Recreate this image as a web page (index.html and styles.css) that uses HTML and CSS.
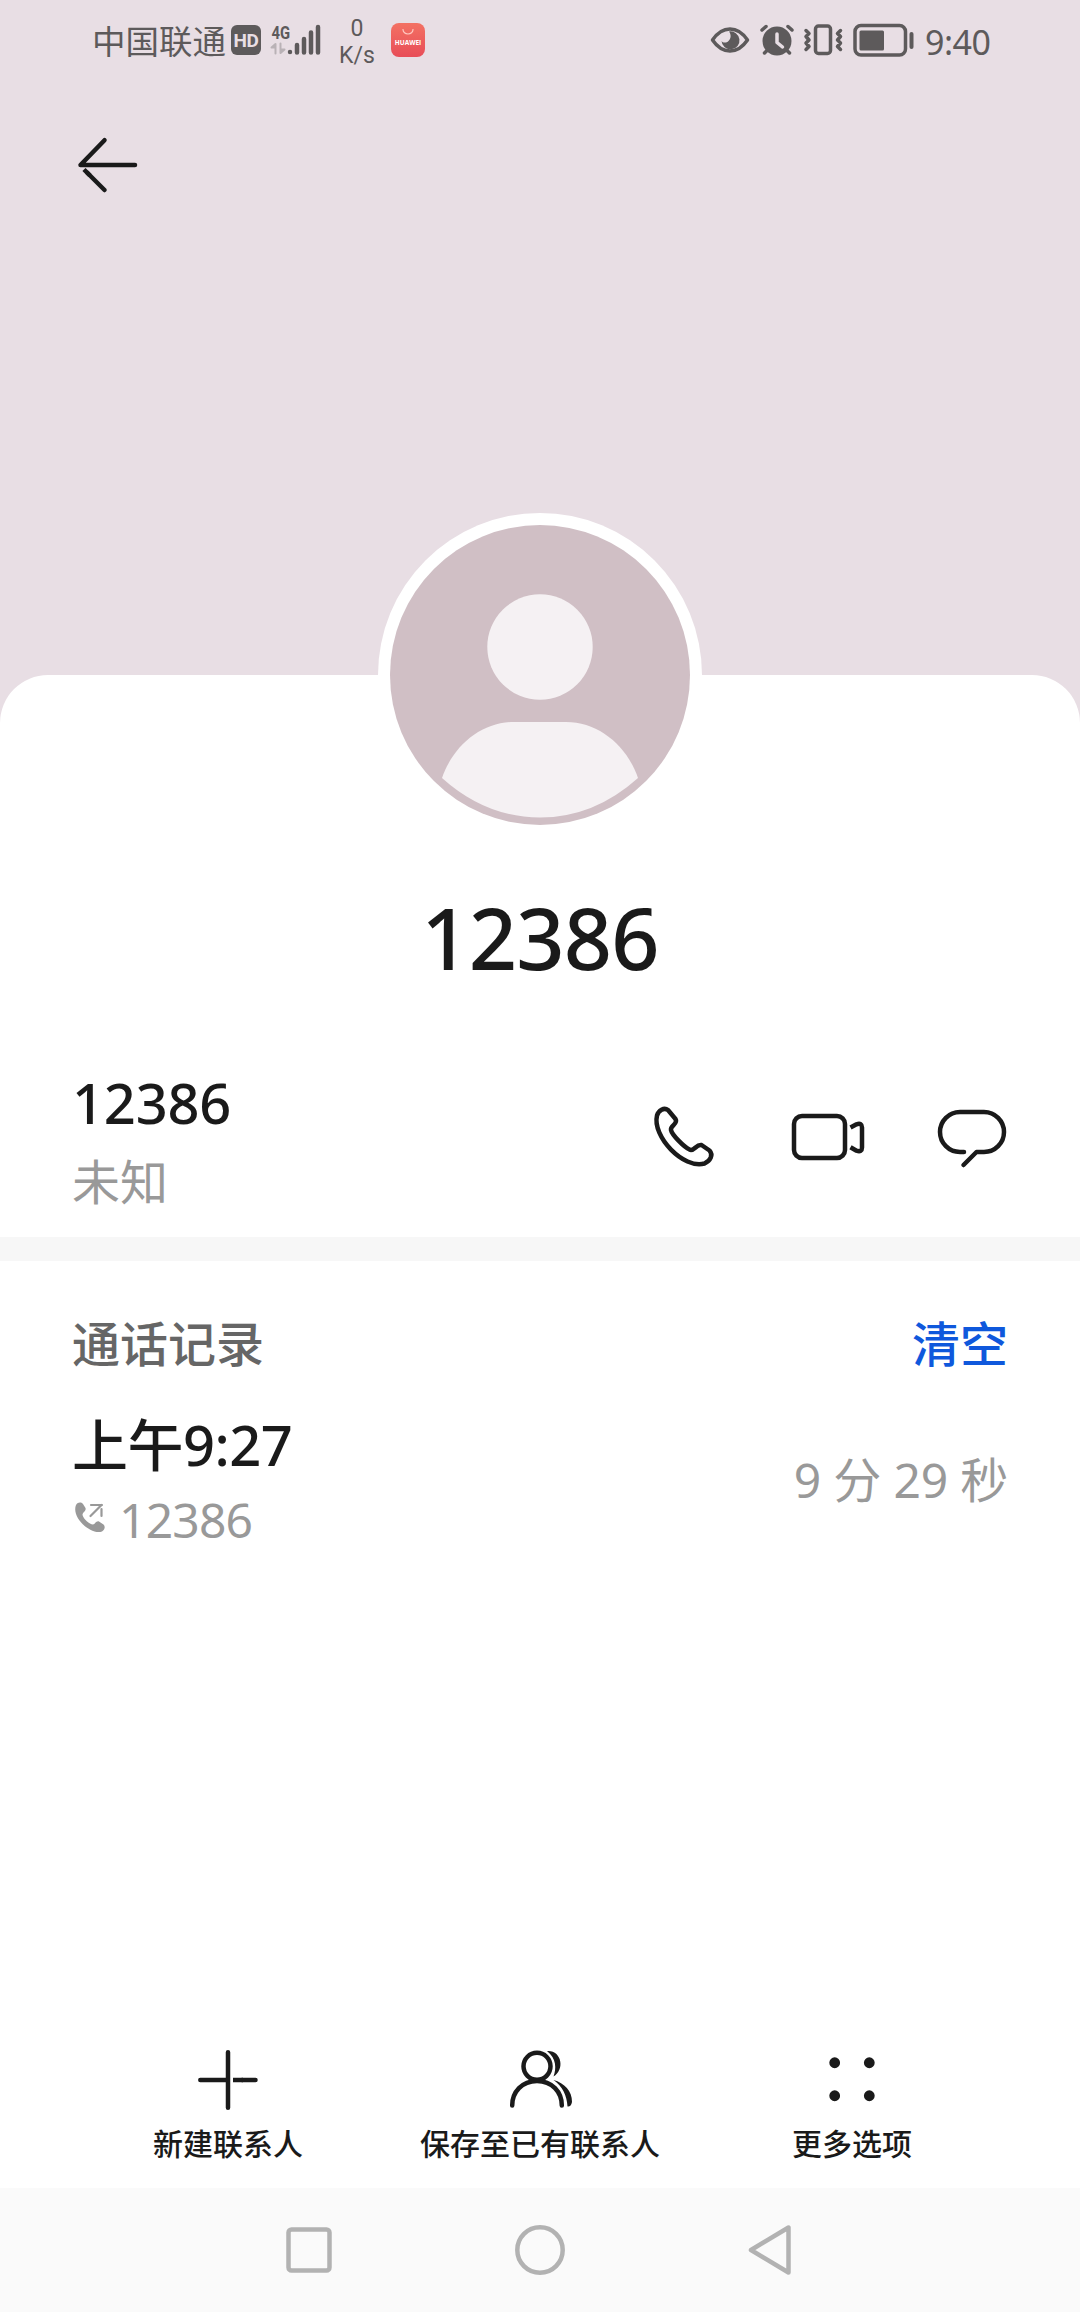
FILE: index.html
```
<!doctype html>
<html lang="zh-CN">

<head>
    <meta charset="utf-8">
    <title>12386</title>
    <link rel="stylesheet" href="styles.css">
</head>

<body>
    <header class="header">
        <div class="status">
            <span class="carrier">中国联通</span>
            <span class="hd">HD</span>
            <div class="network">
                <span class="network-type">4G</span>
                <div class="network-bars">
                    <svg class="data" width="17" height="13" viewBox="0 0 17 13">
                        <path d="M5.500 11.500V2L1.500 5.500h4M10.500 1.500V11l4-3.500h-4" />
                    </svg>
                    <svg class="bars" width="34" height="33" viewBox="288 24 34 33">
                        <path d="M291 52v.1M298 45v7.500M305 39v13.500M312 32.500v20M319 27v25.500" />
                    </svg>
                </div>
            </div>
            <div class="speed"><span>0</span><span>K/s</span></div>
            <div class="app">
                <svg width="12" height="6" viewBox="0 0 12 6"><path d="M1 .5a5 4.500 0 0 0 10 0" /></svg>
                <span>HUAWEI</span>
            </div>
            <svg class="status-icons" width="208" height="36" viewBox="708 22 208 36">
                <!-- eye comfort -->
                <path class="line" d="M712.500 40Q720 29 730 29t17.500 11Q740 51 730 51t-17.500-11z" />
                <path d="M729 31.500a9 9 0 1 1-7.500 9.500c1.500 2 5 2 7 0 2.500-2.500 3-6 .5-9.500z" />
                <!-- alarm -->
                <circle cx="777" cy="41" r="14.500" />
                <path class="line" d="M762 30l4-3.500M792 30l-4-3.500M764.500 53l4-4M789.500 53l-4-4" />
                <path class="hand" d="M777 34v8.500l5.500 4.500" />
                <!-- vibrate -->
                <rect class="line" x="815.500" y="26" width="15" height="27.500" rx="3" />
                <path class="line" d="M806 30.500l3 3-3 3 3 3.500-3 3 3 3.500-3 3M840.500 30.500l-3 3 3 3-3 3.500 3 3-3 3.500 3 3" />
                <!-- battery -->
                <rect class="line" x="855" y="25.500" width="50.500" height="29.500" rx="6" />
                <rect x="859.500" y="30.500" width="24.500" height="20" rx="1.500" />
                <rect x="909.500" y="32" width="4" height="17" rx="2" />
            </svg>
            <span class="clock">9:40</span>
        </div>
        <svg class="back" width="64" height="60" viewBox="76 135 64 60">
            <path d="M135 165H80.500l24-24.800" />
            <path d="M87.500 173l17 17" />
            <path class="flat" d="M84 169.500l6 6" />
        </svg>
    </header>

    <main class="sheet">
        <svg class="avatar" width="324" height="324" viewBox="-162 -162 324 324">
            <circle r="162" fill="#fff" />
            <circle r="150" fill="#d0bfc5" />
            <circle cy="-28" r="52.700" fill="#f5f1f3" />
            <path fill="#f5f1f3" d="M-98 103C-87 71-59 47-26 47H26C59 47 87 71 98 103Q54 142.500 0 142.500T-98 103z" />
        </svg>
        <h1 class="name">12386</h1>

        <section class="contact">
            <div>
                <div class="number">12386</div>
                <div class="place">未知</div>
            </div>
            <div class="actions">
                <svg width="67" height="64" viewBox="652 1105 67 64">
                    <path d="M657 1115.500c1.500-5 7-8.500 11-5.500l7.500 9c3 5-5.500 6.500-4.500 11 1 5 13 17 18.500 19.500 4.500 2.500 6.500-5.500 12-4.500l8 5.500c4 4.500 1 10-5 13-21 6-52.500-27-47.500-48z" />
                </svg>
                <svg width="76" height="52" viewBox="790 1111 76 52">
                    <rect x="794" y="1116" width="51" height="42" rx="8" />
                    <path class="flat" d="M850.500 1127.500l6-3.200q5.500-1.800 5.500 3.200v20q0 5-5.500 3.200l-6-3.500" />
                </svg>
                <svg width="70" height="64" viewBox="937 1105 70 64">
                    <path d="M964 1152h-4a20 20 0 0 1 0-40h24a20 20 0 0 1 0 40h-7.500l-13 13" />
                </svg>
            </div>
        </section>

        <section class="log">
            <div class="log-head">
                <h2>通话记录</h2>
                <a class="clear">清空</a>
            </div>
            <div class="call">
                <div>
                    <div class="time">上午9:27</div>
                    <div class="caller">
                        <svg width="32" height="32" viewBox="74 1501 32 32">
                            <path class="handset" d="M76 1505c2-3 5-3 7-1l2.500 4c1 3-3 4-3 7 1 4 7 9.500 10.500 9.500 2 0 3-4 6-3l4.500 3c2 2 1.500 5-1.500 7-11 4-31-14-26-26.500z" />
                            <path class="arrow" d="M91 1505h11M90.500 1516l11-11M101.500 1509v7" />
                        </svg>
                        <span>12386</span>
                    </div>
                </div>
                <div class="duration">9 分 29 秒</div>
            </div>
        </section>
    </main>

    <footer class="toolbar">
        <div class="tool">
            <svg width="64" height="64" viewBox="196 2048 64 64">
                <path d="M228 2052.300v55.500M200.300 2080H228M242 2080h13.500" />
                <path class="flat" d="M233 2080h10" />
            </svg>
            <span>新建联系人</span>
        </div>
        <div class="tool">
            <svg width="64" height="64" viewBox="508 2048 64 64">
                <circle cx="537" cy="2066.300" r="13.500" />
                <path d="M512.200 2105.500C512.200 2092 522 2081 537 2081s24.800 11 24.800 24.500" />
                <path class="solid" d="M547 2051c15-1 18 19 6.500 25.500 3-8 3-18-6.500-25.500zM553.500 2080c11 3 18.500 11 18.500 22q-1 5-4.500 4.500c-.5-11-5-20-14-26.500z" />
            </svg>
            <span>保存至已有联系人</span>
        </div>
        <div class="tool">
            <svg width="64" height="64" viewBox="820 2048 64 64">
                <path class="dots" d="M834.700 2062.700v.1M869.300 2062.700v.1M834.700 2095.700v.1M869.300 2095.700v.1" />
            </svg>
            <span>更多选项</span>
        </div>
    </footer>

    <nav class="nav">
        <svg width="52" height="52" viewBox="0 0 52 52"><rect x="5.500" y="5.500" width="41" height="41" rx="3" /></svg>
        <svg width="52" height="52" viewBox="0 0 52 52"><circle cx="26" cy="26" r="22.700" /></svg>
        <svg width="52" height="52" viewBox="0 0 52 52"><path d="M43.500 3.500v45L6 26z" /></svg>
    </nav>
</body>

</html>
```
FILE: styles.css
```
* {
    box-sizing: border-box;
}

body {
    margin: 0;
    height: 2312px;
    display: flex;
    flex-direction: column;
    background: #e8dee4;
    color: #1a1a1a;
    font-family: "Noto Sans", "Noto Sans CJK SC", sans-serif;
}

svg {
    display: block;
    flex: none;
    fill: none;
    stroke-linecap: round;
    stroke-linejoin: round;
}

/* header */
.header {
    height: 675px;
}

.status {
    height: 80px;
    padding-left: 92px;
    display: flex;
    align-items: center;
    color: #5d5a5b;
}

.carrier {
    padding-top: 3px;
    font-size: 33.500px;
    line-height: 77px;
    width: 139px;
    white-space: nowrap;
}

.hd {
    width: 30px;
    height: 30px;
    border-radius: 6px;
    background: #5d5a5b;
    color: #e8dee4;
    font: bold 19px/31px Roboto, sans-serif;
    letter-spacing: -.5px;
    text-align: center;
}

.network {
    width: 52px;
    height: 33px;
    margin-left: 9px;
    display: flex;
    align-items: flex-start;
    flex-direction: column;
}

.network-type {
    height: 20px;
    font: 700 19px/17px Roboto, sans-serif;
    transform: scaleX(.78);
    transform-origin: left;
    padding-left: 2px;
}

.network-bars {
    display: flex;
    align-items: flex-end;
    height: 33px;
    margin-top: -20px;
}

.data {
    fill: #b9b2b6;
    stroke: #b9b2b6;
    stroke-width: 2;
    margin-bottom: 2px;
}

.bars {
    stroke: #5d5a5b;
    stroke-width: 4.500;
}

.speed {
    width: 50px;
    padding-top: 4px;
    margin-left: 10px;
    display: flex;
    flex-direction: column;
    align-items: center;
    font: 23px/27.500px Roboto, sans-serif;
}

.app {
    width: 34px;
    height: 34px;
    margin-left: 9px;
    border-radius: 8px;
    background: linear-gradient(#f37163, #e84d58);
    display: flex;
    flex-direction: column;
    align-items: center;
    padding-top: 6px;
    color: #fff;
    font: bold 6.500px/15px "Open Sans", sans-serif;
}

.app svg {
    stroke: #ffc9c2;
    stroke-width: 1.200;
}

.status-icons {
    margin-left: 283px;
    fill: #5d5a5b;
}

.line {
    fill: none;
    stroke: #5d5a5b;
    stroke-width: 3.500;
}

.hand {
    fill: none;
    stroke: #e8dee4;
    stroke-width: 3.500;
}

.clock {
    padding-top: 3px;
    margin-left: 9px;
    font-size: 34px;
    letter-spacing: -.5px;
}

.back {
    margin: 55px 0 0 76px;
    stroke: #1a1a1a;
    stroke-width: 4.500;
}

/* contact card */
.sheet {
    flex: 1;
    display: flex;
    flex-direction: column;
    background: #fff;
    border-radius: 48px 48px 0 0;
}

.avatar {
    align-self: center;
    margin-top: -162px;
}

.name {
    margin: 41px 0 2px;
    font-size: 84.500px;
    font-weight: 500;
    line-height: 120px;
    letter-spacing: -.8px;
    text-align: center;
}

.contact {
    height: 237px;
    padding: 62px 73px 0 72px;
    display: flex;
    justify-content: space-between;
}

.number {
    font-size: 56px;
    font-weight: 500;
    letter-spacing: -.2px;
    line-height: 80px;
}

.place {
    color: #999;
    font-size: 48px;
    line-height: 80px;
}

.actions {
    display: flex;
    align-items: center;
    height: 64px;
    gap: 71px;
    margin-top: 43px;
    stroke: #1a1a1a;
    stroke-width: 4.500;
}

.flat {
    stroke-linecap: butt;
}

/* call log */
.log {
    border-top: 24px solid #f7f7f7;
    padding: 43px 72px 0;
}

.log-head {
    display: flex;
    justify-content: space-between;
    font-size: 48px;
    line-height: 80px;
}

.log-head h2 {
    margin: 0;
    color: #666;
    font-size: 48px;
    font-weight: 500;
}

.clear {
    color: #0f58dc;
    font-weight: 500;
}

.call {
    display: flex;
    justify-content: space-between;
    align-items: center;
    margin-top: 20px;
}

.time {
    font-size: 56px;
    font-weight: 500;
    letter-spacing: -.5px;
    line-height: 80px;
}

.caller {
    display: flex;
    gap: 13px;
    padding-left: 2px;
    color: #999;
    font-size: 48px;
    letter-spacing: -.8px;
    line-height: 72px;
}

.caller svg {
    margin-top: 17px;
}

.handset {
    fill: #999;
}

.arrow {
    stroke: #999;
    stroke-width: 2.200;
}

.duration {
    margin-bottom: 7px;
    color: #999;
    font-size: 48px;
    letter-spacing: -.2px;
}

/* bottom actions */
.toolbar {
    height: 144px;
    padding: 4px 72px 0;
    display: grid;
    grid-template-columns: repeat(3, 1fr);
    background: #fff;
}

.tool {
    display: flex;
    flex-direction: column;
    align-items: center;
    font-size: 30px;
    font-weight: 500;
    line-height: 64px;
    stroke: #1a1a1a;
    stroke-width: 4.500;
}

.tool span {
    white-space: nowrap;
}

.solid {
    fill: #1a1a1a;
    stroke: none;
}

.dots {
    stroke-width: 10.800;
}

.nav {
    height: 124px;
    display: grid;
    grid-template-columns: repeat(3, 231px);
    justify-content: center;
    justify-items: center;
    align-items: center;
    background: #fafafa;
    stroke: #b2b2b2;
    stroke-width: 4.500;
}
```
